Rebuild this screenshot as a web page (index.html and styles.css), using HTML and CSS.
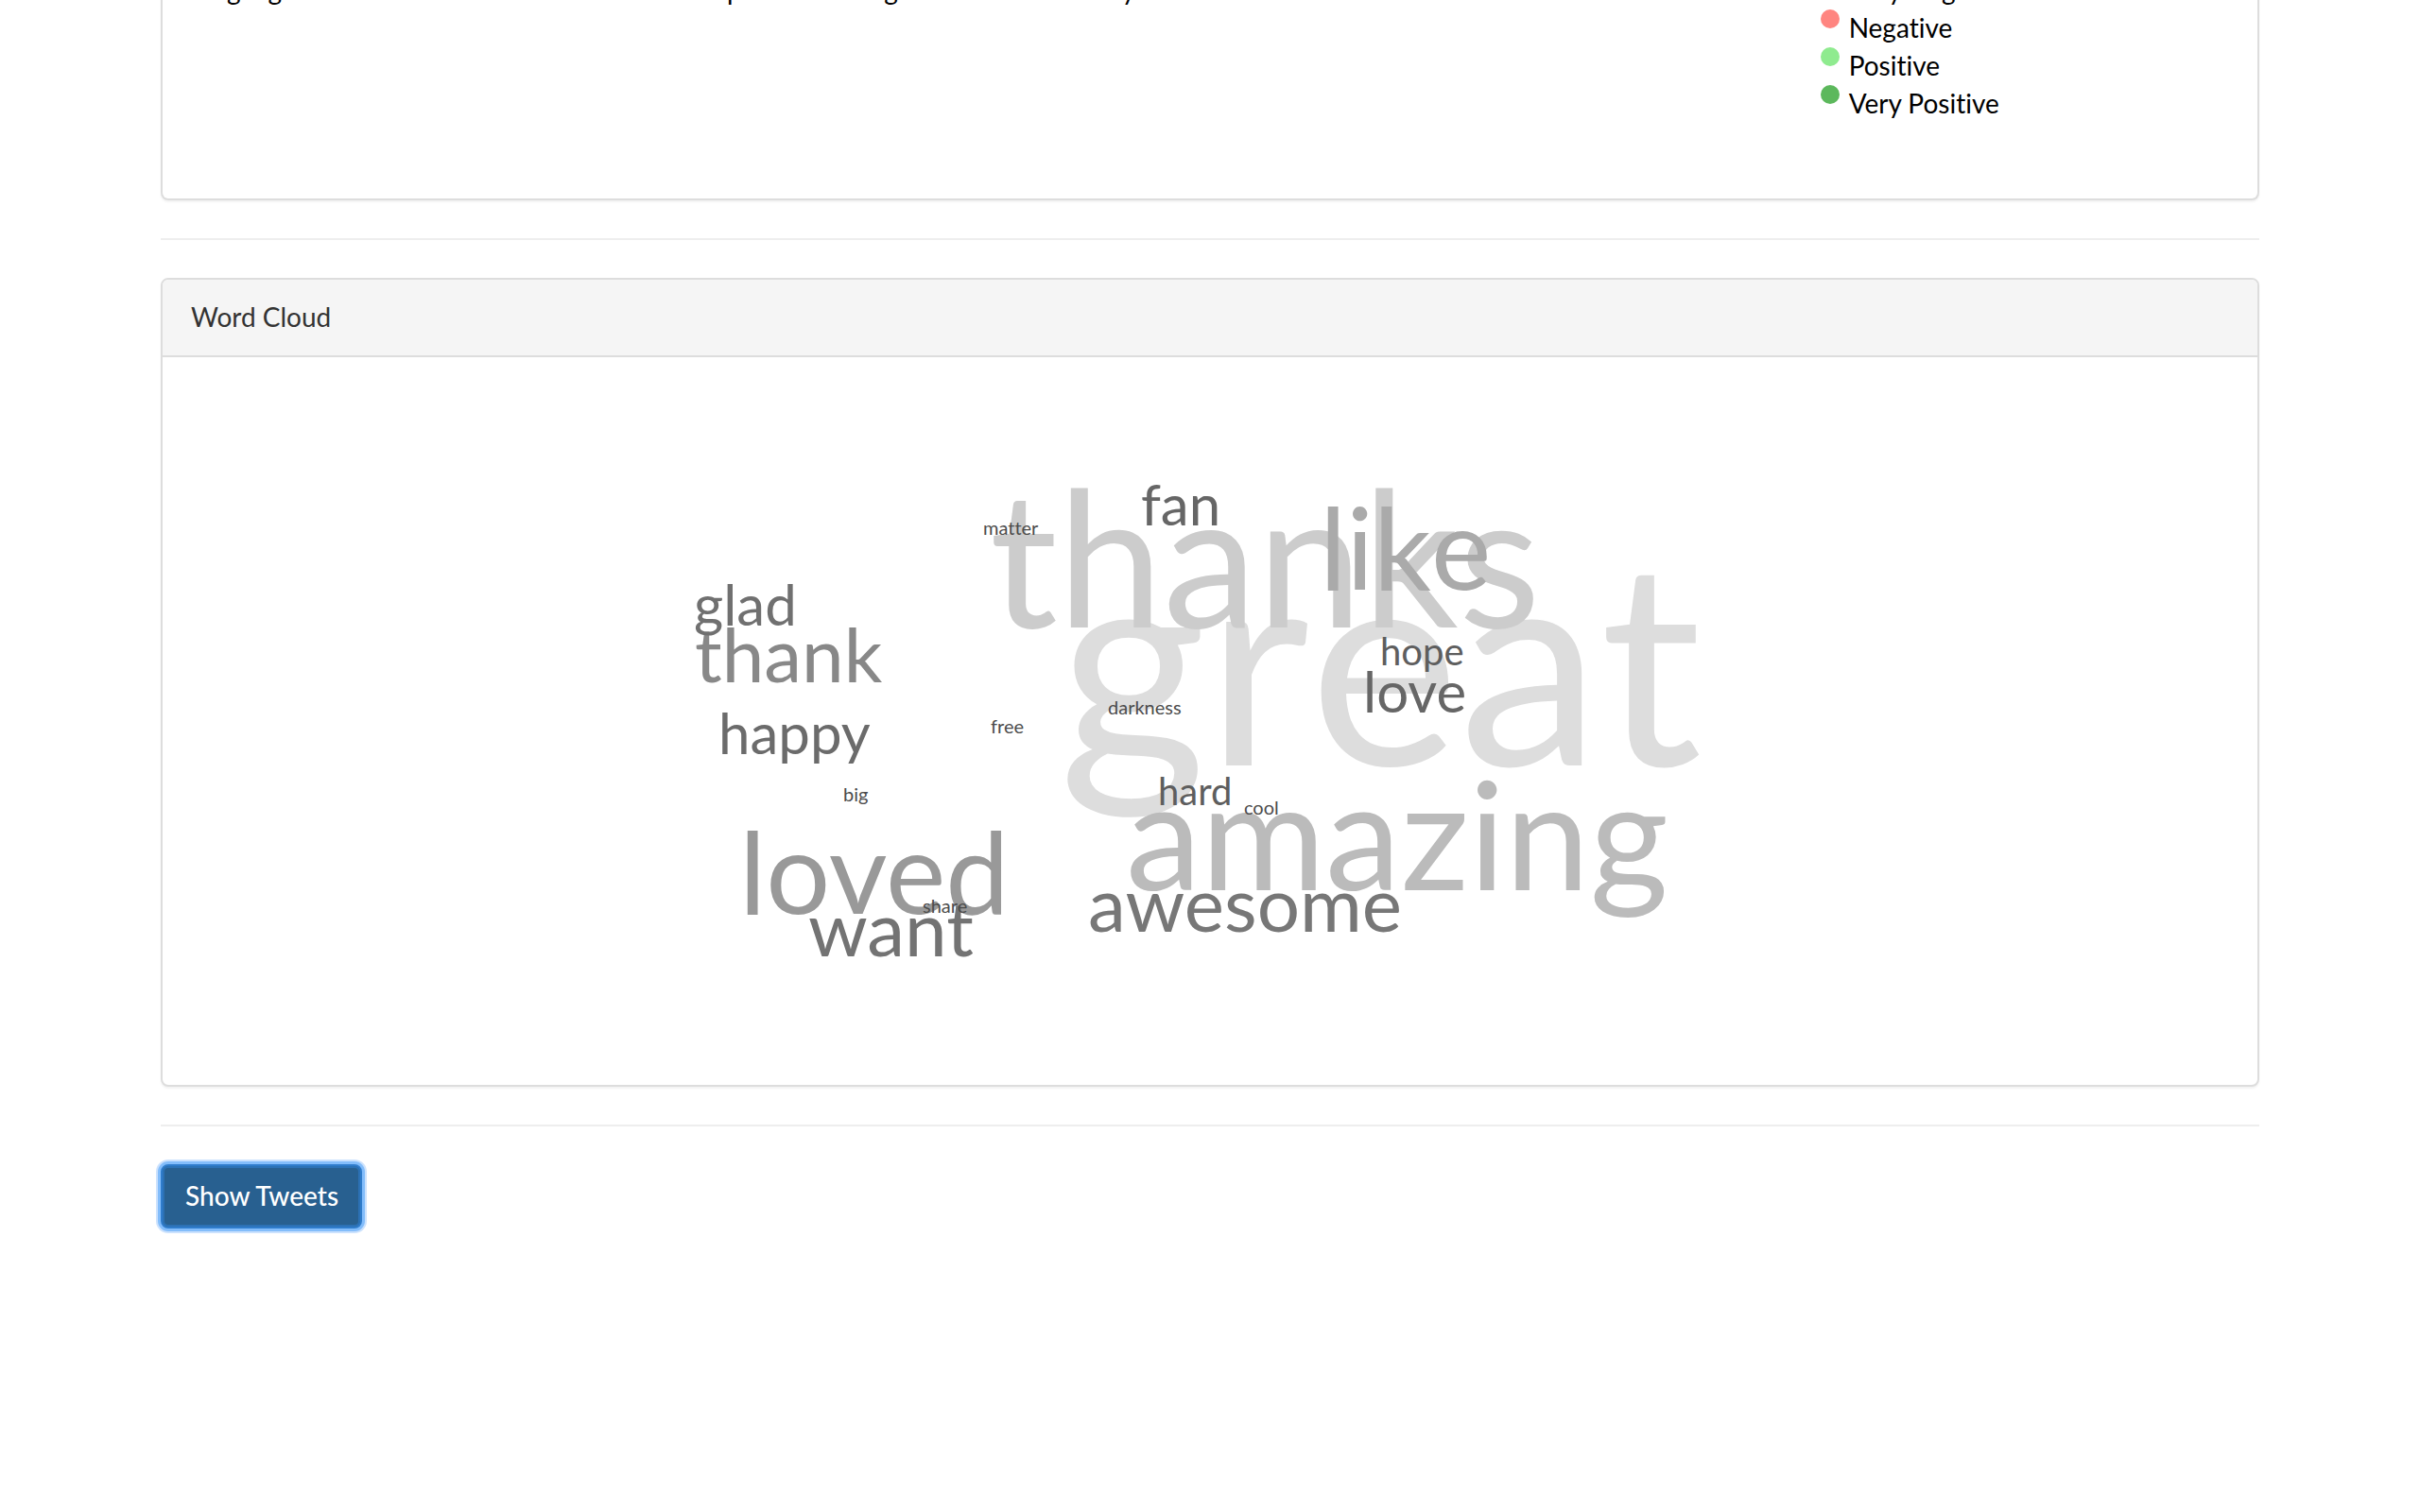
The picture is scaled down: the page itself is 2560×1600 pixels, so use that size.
FILE: index.html
```html
<!DOCTYPE html>
<html lang="en">
<head>
<meta charset="utf-8">
<title>Tweet Sentiment</title>
<link rel="stylesheet" href="styles.css">
</head>
<body>
<main class="container">
  <section class="panel panel-chart">
    <p class="caption">Highlighted terms in the chart were the most positive or negative once scored by tweeters</p>
    <ul class="legend">
      <li><span class="dot dot-very-negative"></span>Very Negative</li>
      <li><span class="dot dot-negative"></span>Negative</li>
      <li><span class="dot dot-positive"></span>Positive</li>
      <li><span class="dot dot-very-positive"></span>Very Positive</li>
    </ul>
  </section>
  <hr class="rule">
  <section class="panel">
    <h2 class="panel-heading">Word Cloud</h2>
    <div class="panel-body">
      <svg class="cloud" width="1100" height="560" viewBox="730 480 1100 560" role="img" aria-label="Word cloud">
        <text class="w15" x="1120" y="810">great</text>
        <text class="w10" x="1047" y="664">thanks</text>
        <text class="w8" x="1191" y="942">amazing</text>
        <text class="w6" x="1396" y="624">like</text>
        <text class="w6 c99" x="782" y="967">loved</text>
        <text class="w4" x="735" y="722">thank</text>
        <text class="w4 c77" x="1151" y="986">awesome</text>
        <text class="w4 c73" x="855" y="1012">want</text>
        <text class="w3 c70" x="734" y="662">glad</text>
        <text class="w3 c6b" x="760" y="798">happy</text>
        <text class="w3" x="1442" y="754">love</text>
        <text class="w3" x="1207" y="556">fan</text>
        <text class="w2" x="1225" y="852">hard</text>
        <text class="w2" x="1460" y="704">hope</text>
        <text class="w1" x="1172" y="756">darkness</text>
        <text class="w1" x="1048" y="776">free</text>
        <text class="w1" x="1040" y="566">matter</text>
        <text class="w1" x="892" y="848">big</text>
        <text class="w1" x="1316" y="862">cool</text>
        <text class="w1" x="976" y="966">share</text>
      </svg>
    </div>
  </section>
  <hr class="rule">
  <button class="btn" type="button">Show Tweets</button>
</main>
</body>
</html>
```
FILE: styles.css
```css
* { box-sizing: border-box; }
body {
  margin: 0;
  background: #fff;
  color: #333;
  font: 28px/40px Lato, "Liberation Sans", sans-serif;
  font-variant-ligatures: none;
}
.container {
  padding: 0 170px 298px;
  overflow: hidden;
}
.panel {
  border: 2px solid #ddd;
  border-radius: 8px;
  box-shadow: 0 2px 2px rgba(0, 0, 0, .05);
  background: #fff;
}
.panel-chart {
  display: flex;
  justify-content: space-between;
  margin-top: -31px;
  padding: 0 260px 81px 40px;
  border-top: 0;
  color: #000;
}
.caption { margin: 0; }
.legend {
  margin: 0;
  padding: 0;
  list-style: none;
}
.legend li {
  display: flex;
  gap: 10px;
}
.dot {
  width: 20px;
  height: 20px;
  margin-top: 1px;
  border-radius: 50%;
}
.dot-very-negative { background: #d9534f; }
.dot-negative { background: #ff8580; }
.dot-positive { background: #8feb8f; }
.dot-very-positive { background: #5cb85c; }
.rule {
  margin: 40px 0;
  border: 0;
  border-top: 2px solid #eee;
}
.panel-heading {
  margin: 0;
  padding: 19px 30px 21px;
  border-bottom: 2px solid #ddd;
  border-radius: 6px 6px 0 0;
  background: #f5f5f5;
  font-size: 28px;
  font-weight: 400;
}
.panel-body {
  display: flex;
  justify-content: center;
  padding: 102px 30px 108px;
}
.cloud text { fill: #666; }
.cloud .w15 { font-size: 300px; fill: #ddd; }
.cloud .w10 { font-size: 200px; fill: #ccc; }
.cloud .w8 { font-size: 160px; fill: #bbb; }
.cloud .w6 { font-size: 120px; fill: #aaa; }
.cloud .w15,
.cloud .w10,
.cloud .w8,
.cloud .w6 { font-kerning: none; }
.cloud .w4 { font-size: 80px; fill: #888; }
.cloud .w3 { font-size: 60px; }
.cloud .w2 { font-size: 40px; fill: #5e5e5e; }
.cloud .w1 { font-size: 20px; fill: #4c4c4c; }
.cloud .c99 { fill: #999; font-kerning: normal; }
.cloud .c77 { fill: #777; }
.cloud .c73 { fill: #737373; }
.cloud .c70 { fill: #707070; }
.cloud .c6b { fill: #6b6b6b; }
.btn {
  padding: 11px 23px 13px 24px;
  border: 2px solid #2f7ccb;
  border-radius: 8px;
  background: #286090;
  box-shadow: inset 0 0 0 2px #2c71b4, 0 0 0 3px #83bdfb, 0 0 0 5px #cce2fd;
  color: #fff;
  font: inherit;
  font-weight: 500;
}
```
